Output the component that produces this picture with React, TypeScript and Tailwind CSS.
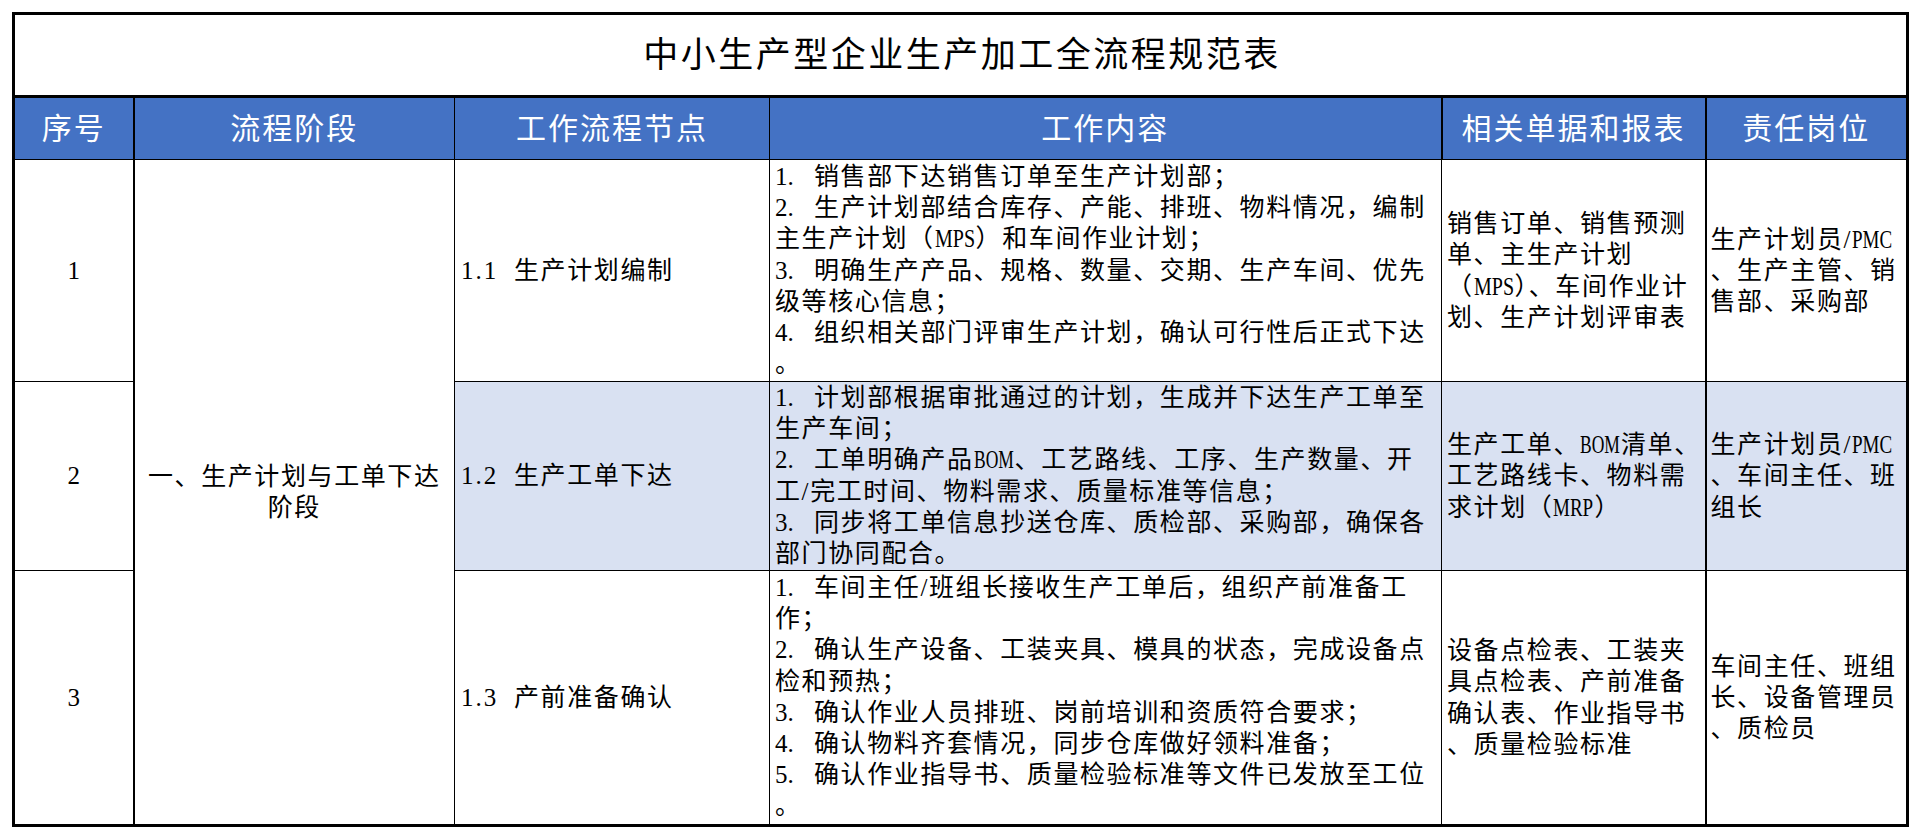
import React from "react";

type L = { n?: string; t: string };

const FONT = "font-['Liberation_Serif','Noto_Sans_CJK_SC',serif]";

const CAPS: Record<string, string> = {
  MPS: "scale-x-[0.8]",
  BOM: "scale-x-[0.7]",
  MRP: "scale-x-[0.76]",
  PMC: "scale-x-[0.76]",
};

function T({ s }: { s: string }) {
  const parts = s.split(/([A-Z]+)/);
  return (
    <>
      {parts.map((p, i) =>
        /^[A-Z]+$/.test(p) ? (
          <span key={i} className="inline-block w-[41px] whitespace-nowrap">
            <span className={`inline-block origin-left tracking-normal ${CAPS[p] ?? "scale-x-[0.75]"}`}>{p}</span>
          </span>
        ) : (
          <React.Fragment key={i}>{p}</React.Fragment>
        )
      )}
    </>
  );
}

function Lines({ lines }: { lines: L[] }) {
  return (
    <>
      {lines.map((l, i) => (
        <div key={i} className="whitespace-nowrap">
          {l.n ? <span className="inline-block w-[39px] tracking-normal">{l.n}</span> : null}
          <T s={l.t} />
        </div>
      ))}
    </>
  );
}

const row1Content: L[] = [
  { n: "1.", t: "销售部下达销售订单至生产计划部；" },
  { n: "2.", t: "生产计划部结合库存、产能、排班、物料情况，编制" },
  { t: "主生产计划（MPS）和车间作业计划；" },
  { n: "3.", t: "明确生产产品、规格、数量、交期、生产车间、优先" },
  { t: "级等核心信息；" },
  { n: "4.", t: "组织相关部门评审生产计划，确认可行性后正式下达" },
  { t: "。" },
];

const row2Content: L[] = [
  { n: "1.", t: "计划部根据审批通过的计划，生成并下达生产工单至" },
  { t: "生产车间；" },
  { n: "2.", t: "工单明确产品BOM、工艺路线、工序、生产数量、开" },
  { t: "工/完工时间、物料需求、质量标准等信息；" },
  { n: "3.", t: "同步将工单信息抄送仓库、质检部、采购部，确保各" },
  { t: "部门协同配合。" },
];

const row3Content: L[] = [
  { n: "1.", t: "车间主任/班组长接收生产工单后，组织产前准备工" },
  { t: "作；" },
  { n: "2.", t: "确认生产设备、工装夹具、模具的状态，完成设备点" },
  { t: "检和预热；" },
  { n: "3.", t: "确认作业人员排班、岗前培训和资质符合要求；" },
  { n: "4.", t: "确认物料齐套情况，同步仓库做好领料准备；" },
  { n: "5.", t: "确认作业指导书、质量检验标准等文件已发放至工位" },
  { t: "。" },
];

const rows = [
  {
    no: "1",
    node: { n: "1.1", t: "生产计划编制" },
    content: row1Content,
    docs: ["销售订单、销售预测", "单、主生产计划", "（MPS）、车间作业计", "划、生产计划评审表"],
    roles: ["生产计划员/PMC", "、生产主管、销", "售部、采购部"],
    h: "h-[222px]",
    pt: "pt-[1px]",
    hl: false,
  },
  {
    no: "2",
    node: { n: "1.2", t: "生产工单下达" },
    content: row2Content,
    docs: ["生产工单、BOM清单、", "工艺路线卡、物料需", "求计划（MRP）"],
    roles: ["生产计划员/PMC", "、车间主任、班", "组长"],
    h: "h-[189px]",
    pt: "pt-0",
    hl: true,
  },
  {
    no: "3",
    node: { n: "1.3", t: "产前准备确认" },
    content: row3Content,
    docs: ["设备点检表、工装夹", "具点检表、产前准备", "确认表、作业指导书", "、质量检验标准"],
    roles: ["车间主任、班组", "长、设备管理员", "、质检员"],
    h: "h-[255px]",
    pt: "pt-[1px]",
    hl: false,
  },
];

export default function App() {
  return (
    <div className={`w-[1920px] h-[839px] bg-white pl-[12px] pt-[12px] text-black ${FONT}`}>
      <table className="table-fixed border-collapse border-[3px] border-black w-[1894px]">
        <colgroup>
          <col className="w-[120px]" />
          <col className="w-[321px]" />
          <col className="w-[315px]" />
          <col className="w-[672px]" />
          <col className="w-[264px]" />
          <col className="w-[202px]" />
        </colgroup>
        <tbody>
          <tr className="h-[83px]">
            <td colSpan={6} className="text-center align-middle text-[35px] tracking-[2.5px] leading-none border-b-[3px] border-black pl-[3px]">
              中小生产型企业生产加工全流程规范表
            </td>
          </tr>
          <tr className="h-[63px] bg-[#4472C4] text-white text-[30px] tracking-[2px] leading-none">
            <td className="text-center align-middle border-r-2 border-b border-black">序号</td>
            <td className="text-center align-middle border-r border-b border-black">流程阶段</td>
            <td className="text-center align-middle border-r border-b border-black">工作流程节点</td>
            <td className="text-center align-middle border-r-2 border-b border-black">工作内容</td>
            <td className="text-center align-middle border-r-2 border-b border-black">相关单据和报表</td>
            <td className="text-center align-middle border-b border-black">责任岗位</td>
          </tr>
          {rows.map((r, i) => {
            const bg = r.hl ? "bg-[#D9E1F2]" : "bg-white";
            return (
              <tr key={r.no} className={`${r.h} text-[25px] tracking-[1.6px] leading-[31.2px]`}>
                <td className="text-center align-middle border-r-2 border-b border-black tracking-normal">{r.no}</td>
                {i === 0 ? (
                  <td rowSpan={3} className="text-center align-middle border-r border-b border-black px-[4px]">
                    <div className="whitespace-nowrap">一、生产计划与工单下达</div>
                    <div className="whitespace-nowrap">阶段</div>
                  </td>
                ) : null}
                <td className={`align-middle border-r border-b border-black pl-[6px] ${bg}`}>
                  <div className="whitespace-nowrap">
                    <span className="inline-block w-[53px] tracking-[2px]">{r.node.n}</span>
                    {r.node.t}
                  </div>
                </td>
                <td className={`align-top border-r border-b border-black pl-[5px] ${r.pt} ${bg}`}>
                  <Lines lines={r.content} />
                </td>
                <td className={`align-middle border-r-2 border-b border-black pl-[5px] ${bg}`}>
                  {r.docs.map((d, k) => (
                    <div key={k} className="whitespace-nowrap">
                      <T s={d} />
                    </div>
                  ))}
                </td>
                <td className={`align-middle border-b border-black pl-[4px] ${bg}`}>
                  {r.roles.map((d, k) => (
                    <div key={k} className="whitespace-nowrap">
                      <T s={d} />
                    </div>
                  ))}
                </td>
              </tr>
            );
          })}
        </tbody>
      </table>
    </div>
  );
}
